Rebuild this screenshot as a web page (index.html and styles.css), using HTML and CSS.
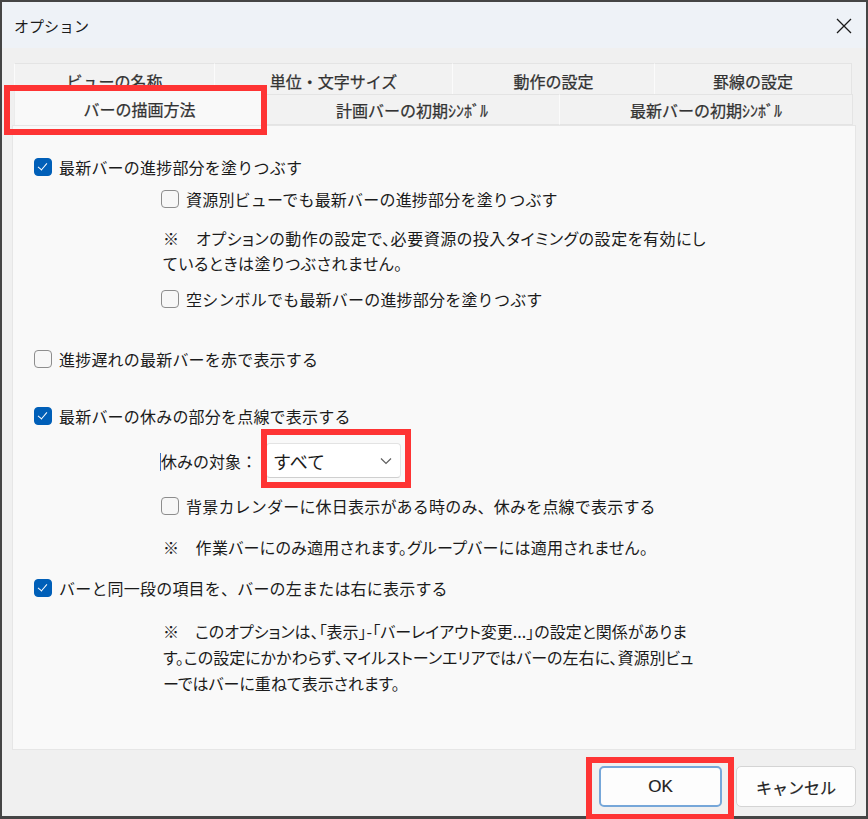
FILE: index.html
```html
<!DOCTYPE html>
<html lang="ja">
<head>
<meta charset="utf-8">
<title>オプション</title>
<link rel="stylesheet" href="styles.css">
</head>
<body>
<div class="window">
  <div class="titlebar">
    <span class="title">オプション</span>
    <svg class="close" width="16" height="16" viewBox="0 0 16 16"><path d="M1 1 L15 15 M15 1 L1 15" stroke="#1a1a1a" stroke-width="1.3" fill="none"/></svg>
  </div>
  <div class="body">
    <div class="tabs">
      <div class="tabrow row1">
        <div class="tab t1">ビューの名称</div>
        <div class="tab t2">単位・文字サイズ</div>
        <div class="tab t3">動作の設定</div>
        <div class="tab t4">罫線の設定</div>
      </div>
      <div class="tabrow row2">
        <div class="tab sel">バーの描画方法</div>
        <div class="tab t6">計画バーの初期ｼﾝﾎﾞﾙ</div>
        <div class="tab t7">最新バーの初期ｼﾝﾎﾞﾙ</div>
      </div>
      <div class="redbox rb-tab"></div>
    </div>
    <div class="panel">
      <label class="item main g1"><span class="cb on"></span><span>最新バーの進捗部分を塗りつぶす</span></label>
      <label class="item sub g2"><span class="cb"></span><span>資源別ビューでも最新バーの進捗部分を塗りつぶす</span></label>
      <p class="note n1">※　オプションの動作の設定で、必要資源の投入タイミングの設定を有効にし<br>ているときは塗りつぶされません。</p>
      <label class="item sub g3"><span class="cb"></span><span>空シンボルでも最新バーの進捗部分を塗りつぶす</span></label>
      <label class="item main g4"><span class="cb"></span><span>進捗遅れの最新バーを赤で表示する</span></label>
      <label class="item main g5"><span class="cb on"></span><span>最新バーの休みの部分を点線で表示する</span></label>
      <div class="selrow">
        <span class="sellabel"><i class="caret"></i>休みの対象：</span>
        <div class="select">
          <span>すべて</span>
          <svg width="12" height="8" viewBox="0 0 12 8"><path d="M1 1.5 L6 6.5 L11 1.5" stroke="#5f5f5f" stroke-width="1.2" fill="none"/></svg>
          <div class="redbox rb-sel"></div>
        </div>
      </div>
      <label class="item sub g6"><span class="cb"></span><span>背景カレンダーに休日表示がある時のみ、休みを点線で表示する</span></label>
      <p class="note n2">※　作業バーにのみ適用されます。グループバーには適用されません。</p>
      <label class="item main g7"><span class="cb on"></span><span>バーと同一段の項目を、バーの左または右に表示する</span></label>
      <p class="note n3">※　このオプションは、「表示」-「バーレイアウト変更...」の設定と関係がありま<br>す。この設定にかかわらず、マイルストーンエリアではバーの左右に、資源別ビュ<br>ーではバーに重ねて表示されます。</p>
    </div>
    <div class="buttons">
      <div class="btn ok">OK<div class="redbox rb-ok"></div></div>
      <div class="btn cancel">キャンセル</div>
    </div>
  </div>
</div>
</body>
</html>
```

FILE: styles.css
```css
* { box-sizing: border-box; }
html, body { margin: 0; padding: 0; }
body {
  width: 868px;
  height: 819px;
  overflow: hidden;
  font-family: "Noto Sans CJK JP", "Noto Sans", sans-serif;
  color: #1b1b1b;
  background: #f0f0f0;
}
.window {
  width: 868px;
  height: 819px;
  border: 2px solid #454545;
  border-bottom-width: 3px;
  background: #f0f0f0;
  display: flex;
  flex-direction: column;
}
.titlebar {
  height: 46px;
  flex: none;
  background: #eef2f7;
  display: flex;
  align-items: center;
  justify-content: space-between;
  padding: 0 14px 0 12px;
}
.title { font-size: 15px; line-height: 1; margin-top: 1px; }
.close { margin-top: 2px; }
.body {
  flex: 1;
  position: relative;
  padding: 15px 12px 0 10px;
  display: flex;
  flex-direction: column;
}
.tabs { position: relative; padding: 0 2px; }
.tabrow { display: flex; font-size: 16px; color: #333; }
.tab {
  display: flex;
  align-items: center;
  justify-content: center;
  background: #f2f2f2;
  border: 1px solid #e4e4e4;
  border-left-color: #fbfbfb;
  margin-right: -1px;
  -webkit-text-stroke: 0.25px #333;
}
.row1 { height: 33px; }
.row1 .tab { height: 33px; padding-top: 2px; }
.t1 { width: 201px; }
.t2 { width: 239px; }
.t3 { width: 203px; }
.t4 { width: 198px; }
.row2 { height: 31px; margin-top: -2px; }
.row2 .tab { height: 31px; }
.tab.sel {
  width: 252px;
  height: 36px;
  margin-top: -5px;
  margin-left: 0;
  background: #f9f9f9;
  border-color: #ececec;
  border-bottom: none;
  position: relative;
  z-index: 1;
  padding-top: 2px;
}
.t6 { width: 297px; }
.t7 { width: 295px; }
.redbox {
  position: absolute;
  border: 6px solid #fe3434;
  pointer-events: none;
  z-index: 5;
}
.rb-tab { left: -8px; top: 22px; width: 263px; height: 50px; }
.panel {
  width: 844px;
  height: 625px;
  margin-top: 0;
  background: #f9f9f9;
  border: 1px solid #e6e6e6;
  padding: 29px 0 0 21px;
  display: flex;
  flex-direction: column;
  align-items: flex-start;
  font-size: 16px;
}
.item {
  display: flex;
  align-items: center;
  height: 24px;
  line-height: 24px;
  white-space: nowrap;
}
.item span + span { letter-spacing: 0.2px; }
.cb {
  width: 18px;
  height: 18px;
  border: 1px solid #8d8d8d;
  border-radius: 4px;
  background: #f7f7f7;
  margin-right: 7px;
  flex: none;
  position: relative;
}
.cb.on {
  background: #005fb8;
  border-color: #005fb8;
}
.cb.on::after {
  content: "";
  position: absolute;
  left: 5px;
  top: 2px;
  width: 4px;
  height: 8px;
  border-right: 1.5px solid #fff;
  border-bottom: 1.5px solid #fff;
  transform: rotate(40deg);
}
.sub { margin-left: 127px; }
.note {
  margin: 0 0 0 129px;
  white-space: nowrap;
  font-size: 16px;
  font-feature-settings: "palt";
}
.g1 { margin-top: 0; }
.g2 { margin-top: 8px; }
.n1 { margin-top: 15px; line-height: 25px; letter-spacing: 0.55px; }
.g3 { margin-top: 11px; }
.g4 { margin-top: 36px; }
.g5 { margin-top: 33px; }
.selrow {
  margin: 15px 0 0 127px;
  display: flex;
  align-items: center;
  height: 35px;
}
.sellabel { font-size: 16px; position: relative; margin-right: 9px; }
.caret {
  position: absolute;
  left: -1px;
  top: 4px;
  width: 1px;
  height: 18px;
  background: #3a6fc4;
}
.select {
  position: relative;
  width: 135px;
  height: 35px;
  background: #fff;
  border: 1px solid #e3e3e3;
  border-bottom-color: #cfcfcf;
  border-radius: 4px;
  display: flex;
  align-items: center;
  justify-content: space-between;
  padding: 0 8px 0 6px;
  font-size: 18px;
}
.rb-sel { left: -6px; top: -15px; width: 150px; height: 59px; }
.g6 { margin-top: 16px; }
.n2 { margin-top: 17px; line-height: 25px; letter-spacing: 0.3px; }
.g7 { margin-top: 16px; }
.n3 { margin-top: 18px; line-height: 26px; }
.buttons {
  display: flex;
  justify-content: flex-end;
  gap: 14px;
  padding: 16px 0 0 0;
  margin-right: -2px;
}
.btn {
  position: relative;
  height: 41px;
  border-radius: 5px;
  background: #fdfdfd;
  border: 1px solid #d4d4d4;
  display: flex;
  align-items: center;
  justify-content: center;
  font-size: 16px;
  color: #222;
  -webkit-text-stroke: 0.2px #222;
}
.ok {
  width: 123px;
  border: 2px solid #76a7d9;
  font-family: "Liberation Sans", sans-serif;
  font-size: 17px;
}
.cancel { width: 120px; }
.rb-ok { left: -15px; top: -11px; width: 148px; height: 63px; }
```
